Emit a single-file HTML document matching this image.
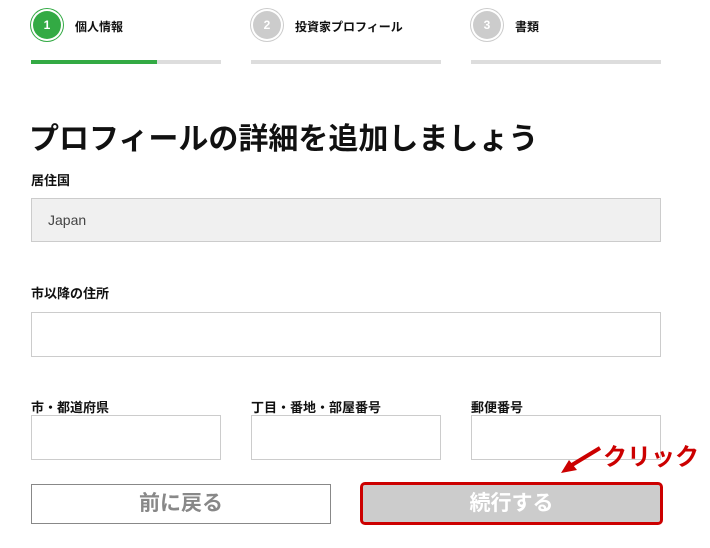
<!DOCTYPE html>
<html><head><meta charset="utf-8"><style>
body{margin:0;width:710px;height:548px;background:#fff;font-family:"Liberation Sans","Noto Sans CJK JP",sans-serif;position:relative;overflow:hidden;color:#111}
.a{position:absolute}
.c{width:28px;height:28px;border-radius:50%;color:#fff;font-size:12px;font-weight:bold;text-align:center;line-height:28px;box-shadow:0 0 0 2px #fff,0 0 0 3px #ccc}
.st{font-size:12px;font-weight:bold}
.bar{height:4px;background:#ddd;width:190px;top:60px}
.lb{font-size:13px;font-weight:bold}
.in{border:1px solid #ccc;box-sizing:border-box;background:#fff}
</style></head><body>
<div class="a c" style="left:33px;top:11px;background:#33aa44;box-shadow:0 0 0 2px #fff,0 0 0 3px #33aa44">1</div>
<div class="a st" style="left:75px;top:18px">個人情報</div>
<div class="a c" style="left:253px;top:11px;background:#ccc">2</div>
<div class="a st" style="left:295px;top:18px">投資家プロフィール</div>
<div class="a c" style="left:473px;top:11px;background:#ccc">3</div>
<div class="a st" style="left:515px;top:18px">書類</div>
<div class="a bar" style="left:31px"></div><div class="a" style="left:31px;top:60px;height:4px;width:126px;background:#33aa44"></div>
<div class="a bar" style="left:251px"></div>
<div class="a bar" style="left:471px"></div>
<div class="a" style="left:29px;top:114px;font-size:30px;font-weight:bold">プロフィールの詳細を追加しましょう</div>
<div class="a lb" style="left:31px;top:170px">居住国</div>
<div class="a in" style="left:31px;top:198px;width:630px;height:44px;background:#f0f0f0;font-size:14px;color:#444;padding:13px 0 0 16px">Japan</div>
<div class="a lb" style="left:31px;top:283px">市以降の住所</div>
<div class="a in" style="left:31px;top:312px;width:630px;height:45px"></div>
<div class="a lb" style="left:31px;top:397px">市・都道府県</div>
<div class="a lb" style="left:251px;top:397px">丁目・番地・部屋番号</div>
<div class="a lb" style="left:471px;top:397px">郵便番号</div>
<div class="a in" style="left:31px;top:415px;width:190px;height:45px"></div>
<div class="a in" style="left:251px;top:415px;width:190px;height:45px"></div>
<div class="a in" style="left:471px;top:415px;width:190px;height:45px"></div>
<div class="a" style="left:31px;top:484px;width:300px;height:40px;border:1px solid #888;box-sizing:border-box;text-align:center;line-height:37px;font-size:21px;font-weight:bold;color:#888">前に戻る</div>
<div class="a" style="left:360px;top:482px;width:303px;height:43px;border:3px solid #c00;border-radius:5px;background:#ccc;box-sizing:border-box;text-align:center;line-height:37px;font-size:21px;font-weight:bold;color:#fff">続行する</div>
<div class="a" style="left:603px;top:437px;font-size:24px;font-weight:bold;color:#c00">クリック</div>
<svg class="a" style="left:555px;top:440px" width="50" height="40"><path d="M45 8 L12 28" stroke="#c00" stroke-width="4"/><path d="M6 33 L22 30 L14 20 Z" fill="#c00"/></svg>
</body></html>
